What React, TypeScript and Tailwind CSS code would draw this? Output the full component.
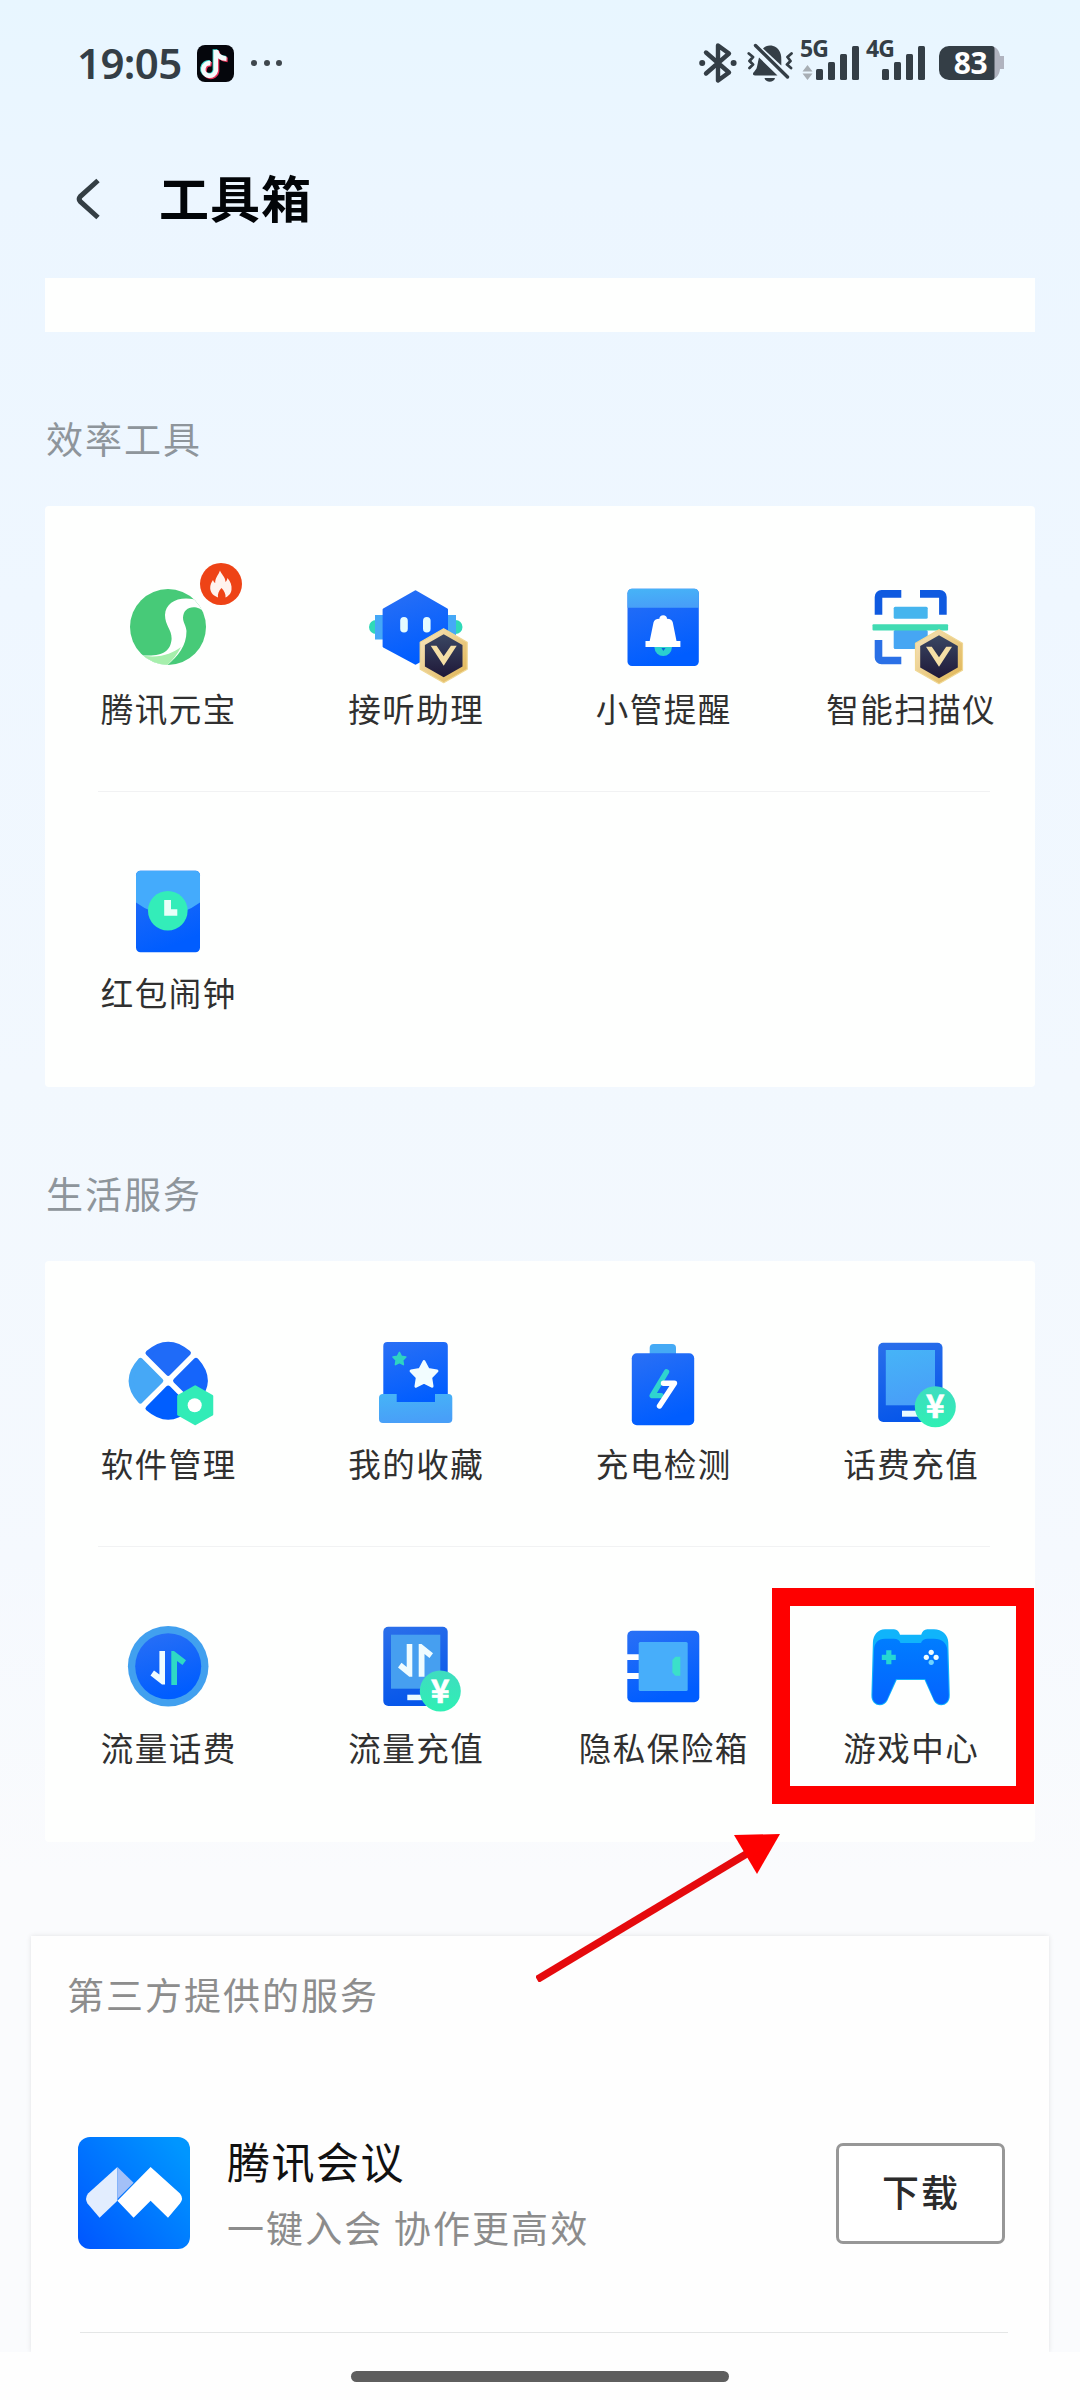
import type { ReactNode } from "react";
import clsx from "clsx";

type Tool = {
  name: string;
  icon: ReactNode;
  hot?: boolean;
  highlight?: boolean;
};

/* ---------- shared icon parts ---------- */

function Gradients() {
  return (
    <svg className="absolute h-0 w-0" aria-hidden="true">
      <defs>
        <linearGradient id="blue" x1="0" y1="0" x2="0.3" y2="1">
          <stop offset="0" stopColor="#2a70f5" />
          <stop offset="1" stopColor="#005dff" />
        </linearGradient>
        <linearGradient id="frame" x1="0" y1="0" x2="0.2" y2="1">
          <stop offset="0" stopColor="#2b6fea" />
          <stop offset="1" stopColor="#0757ea" />
        </linearGradient>
        <linearGradient id="sky" x1="0" y1="0" x2="0.2" y2="1">
          <stop offset="0" stopColor="#46b4f7" />
          <stop offset="1" stopColor="#489ff8" />
        </linearGradient>
        <linearGradient id="teal" x1="0" y1="0" x2="0" y2="1">
          <stop offset="0" stopColor="#3fdcc0" />
          <stop offset="1" stopColor="#2ff0b4" />
        </linearGradient>
        <linearGradient id="gold" x1="0" y1="0" x2="1" y2="1">
          <stop offset="0" stopColor="#f7e6c0" />
          <stop offset="1" stopColor="#dfb350" />
        </linearGradient>
        <linearGradient id="night" x1="0" y1="0" x2="0" y2="1">
          <stop offset="0" stopColor="#3a4763" />
          <stop offset="1" stopColor="#1f1838" />
        </linearGradient>
        <linearGradient id="pad" x1="0" y1="0" x2="0" y2="1">
          <stop offset="0" stopColor="#007dff" />
          <stop offset="1" stopColor="#0463ff" />
        </linearGradient>
        <linearGradient id="meeting" x1="0" y1="1" x2="1" y2="0.2">
          <stop offset="0" stopColor="#0055ff" />
          <stop offset="1" stopColor="#0096ff" />
        </linearGradient>
      </defs>
    </svg>
  );
}

function Icon({ children }: { children: ReactNode }) {
  return (
    <svg viewBox="0 0 100 100" className="mr-[1px] block size-[100px] overflow-visible">
      {children}
    </svg>
  );
}

function VipBadge({ x, y }: { x: number; y: number }) {
  return (
    <g transform={`translate(${x} ${y})`}>
      <path
        d="M0-27 23.5-13.5V13.5L0 27-23.5 13.5V-13.5Z"
        fill="url(#gold)"
        stroke="#f0d894"
        strokeWidth="1.2"
        strokeLinejoin="round"
      />
      <path d="M0-21.5 18.8-10.8V10.8L0 21.5-18.8 10.8V-10.8Z" fill="url(#night)" />
      <path d="M-13-10H-7.2L0 .5 7.2-10H13L0 10Z" fill="#f5dfa6" />
    </g>
  );
}

function Coin({ x, y }: { x: number; y: number }) {
  return (
    <g>
      <circle cx={x} cy={y} r="20.5" fill="url(#teal)" />
      <text
        x={x}
        y={y + 11.5}
        textAnchor="middle"
        fontFamily="Noto Sans CJK SC"
        fontSize="32"
        fontWeight="700"
        fill="#fff"
        stroke="#fff"
        strokeWidth="0.6"
      >
        ¥
      </text>
    </g>
  );
}

const STAR =
  "M0-1 .3-.42 .95-.31 .49.16 .59.81 0 .51-.59.81-.49.16-.95-.31-.3-.42Z";

/* ---------- tool icons ---------- */

const YuanbaoIcon = (
  <Icon>
    <clipPath id="ball">
      <circle cx="50" cy="51" r="38" />
    </clipPath>
    <g clipPath="url(#ball)">
      <rect width="100" height="100" fill="#47ca78" />
      <path
        d="M84 26C66 18 47.5 24 47 39C47 50 54.5 54 53.5 64C52 76 44 81.5 20 79L46 92C58 82 68.5 72 68.5 55C68 49 65 47 65 41.5C65.5 35 69.5 31.3 75.5 31.3C80 31.3 84 33 90 40V20Z"
        fill="#fff"
      />
      <path d="M20 79C42 83 53 78 63 71C58.5 80 53 86 46 92Z" fill="#a6efac" />
    </g>
  </Icon>
);

const RobotIcon = (
  <Icon>
    <circle cx="10" cy="51" r="7" fill="#2fd9b8" />
    <circle cx="89.5" cy="51" r="7" fill="#2fd9b8" />
    <path d="M9 39H18V63.5H9ZM81 39H90V63.5H81Z" fill="#45a8f7" />
    <path
      d="M49.5 15.5 80.8 33.5V70.5L49.5 87.5 17.8 70.5V33.5Z"
      fill="url(#blue)"
      stroke="url(#blue)"
      strokeWidth="2.4"
      strokeLinejoin="round"
    />
    <rect x="34.2" y="41" width="7.6" height="15.5" rx="3.8" fill="#e4fbff" />
    <rect x="57" y="41" width="7.6" height="15.5" rx="3.8" fill="#e4fbff" />
    <VipBadge x={77.7} y={79.7} />
  </Icon>
);

const ReminderIcon = (
  <Icon>
    <rect x="14.5" y="12.7" width="71.3" height="77.3" rx="4.5" fill="url(#blue)" />
    <path d="M14.5 31.7V17.2A4.5 4.5 0 0 1 19 12.7H81.3A4.5 4.5 0 0 1 85.8 17.2V31.7Z" fill="url(#sky)" />
    <circle cx="50.2" cy="71.3" r="8.7" fill="#2bd0cf" />
    <path
      d="M50.2 39.3C52.5 39.3 54 40.8 54 42.8C57.5 43 59.3 44.2 59.8 46.5L63.5 65H67.4V71H32.5V65H36.7L40.5 46.5C41 44.2 43 43 46.4 42.8C46.4 40.8 48 39.3 50.2 39.3Z"
      fill="#fff"
    />
    <path d="M48.5 72H52.5L50.3 75Z" fill="#0b63d8" />
  </Icon>
);

const ScannerIcon = (
  <Icon>
    <g fill="none" stroke="#0f5ae0" strokeWidth="7.6">
      <path d="M40.3 17.9H20.5A3 3 0 0 0 17.5 20.9V38.7" />
      <path d="M59 17.9H78.9A3 3 0 0 1 81.9 20.9V38.7" />
      <path d="M40.3 84.5H20.5A3 3 0 0 1 17.5 81.5V64" stroke="#2a70e6" />
    </g>
    <rect x="32.7" y="30.7" width="34" height="12" rx="1.5" fill="#45b5ee" />
    <rect x="32.7" y="54" width="34" height="19" rx="1.5" fill="#46a6f3" />
    <rect x="11.5" y="48.3" width="75.6" height="6.2" rx="1" fill="#41dbb2" />
    <VipBadge x={78} y={80.7} />
  </Icon>
);

const RedPacketIcon = (
  <Icon>
    <rect x="18" y="10.7" width="64" height="81.5" rx="4.5" fill="url(#blue)" />
    <path
      d="M18 42.5V15.2A4.5 4.5 0 0 1 22.5 10.7H77.5A4.5 4.5 0 0 1 82 15.2V42.5Q50 66 18 42.5Z"
      fill="#44abfc"
    />
    <circle cx="49.8" cy="50.7" r="19.8" fill="#33edb9" />
    <path d="M46.2 40H53V49.2H59.3V55.7H46.2Z" fill="#e9fff9" />
  </Icon>
);

const SoftwareIcon = (
  <Icon>
    <g strokeWidth="5" strokeLinejoin="round">
      <path d="M50.2 42.3 30 22Q50.2 4.5 70.4 22Z" fill="#1f6bf8" stroke="#1f6bf8" />
      <path d="M42.8 49.7 22.4 29.3Q4 49.7 22.4 70.1Z" fill="#46a8f6" stroke="#46a8f6" />
      <path d="M57.6 49.7 78 29.3Q96.5 49.7 78 70.1Z" fill="#1565fb" stroke="#1565fb" />
      <path d="M50.2 57.1 30 77.4Q50.2 95 70.4 77.4Z" fill="#005eff" stroke="#005eff" />
    </g>
    <path
      d="M77.2 55.5 94 65V83.5L77.2 93 60.4 83.5V65Z"
      fill="#32ecb7"
      stroke="#32ecb7"
      strokeWidth="2.5"
      strokeLinejoin="round"
    />
    <circle cx="76.7" cy="74.2" r="7" fill="#fff" />
  </Icon>
);

const FavoritesIcon = (
  <Icon>
    <rect x="17.3" y="11" width="64.5" height="66" rx="4" fill="url(#blue)" />
    <path
      d="M17 63H30.7V71H69V63H82.3A4 4 0 0 1 86.3 67V88A4 4 0 0 1 82.3 92H17A4 4 0 0 1 13 88V67A4 4 0 0 1 17 63Z"
      fill="url(#sky)"
    />
    <path
      d={STAR}
      transform="translate(58 44.2) scale(13.6)"
      fill="#f2fdff"
      stroke="#f2fdff"
      strokeWidth="0.22"
      strokeLinejoin="round"
    />
    <path
      d={STAR}
      transform="translate(33.4 28.2) scale(6.8)"
      fill="#2fd3c2"
      stroke="#2fd3c2"
      strokeWidth="0.22"
      strokeLinejoin="round"
    />
  </Icon>
);

const ChargeIcon = (
  <Icon>
    <path d="M36.7 25V17A4 4 0 0 1 40.7 13H59A4 4 0 0 1 63 17V25Z" fill="#45aaf5" />
    <rect x="18.8" y="22.3" width="62.4" height="72" rx="5" fill="url(#blue)" />
    <g fill="none" strokeWidth="5.4" strokeLinecap="round" strokeLinejoin="round">
      <path d="M53.5 40.8 39.2 64.6H48" stroke="#2fd4cf" />
      <path d="M50.5 52.3H61.5L46.5 75" stroke="#fff" />
    </g>
  </Icon>
);

const BillIcon = (
  <Icon>
    <rect x="17.2" y="11.7" width="64.3" height="79.3" rx="5" fill="url(#frame)" />
    <rect x="24.8" y="19" width="49.2" height="55.3" fill="url(#sky)" />
    <rect x="41" y="79.7" width="20" height="6" fill="#eafaff" />
    <Coin x={74.3} y={75.7} />
  </Icon>
);

const DataBillIcon = (
  <Icon>
    <circle cx="50.2" cy="51.3" r="40.3" fill="#41a0ef" />
    <circle cx="50.2" cy="51.3" r="33" fill="url(#blue)" />
    <path d="M47 36H41.4V59.5L36 55.5L32.5 60.5L44 69.5H47Z" fill="#effcff" />
    <path d="M53.3 70H59V46L64.5 50L68 45.2L56 36H53.3Z" fill="#2fd9c4" />
  </Icon>
);

const DataTopUpIcon = (
  <Icon>
    <rect x="17.3" y="11.7" width="64.4" height="79.3" rx="5" fill="url(#frame)" />
    <rect x="25" y="19.7" width="49.3" height="54" fill="#469ff0" />
    <path d="M46.3 29H40.7V52L35.5 47.8L32 52.6L43.3 61.8H46.3Z" fill="#effcff" />
    <path d="M52.7 61.8H58.5V39L63.5 43L67 38.3L55.5 29H52.7Z" fill="#effcff" />
    <rect x="41.3" y="79.7" width="20" height="5.5" fill="#eafaff" />
    <Coin x={74.3} y={76} />
  </Icon>
);

const SafeIcon = (
  <Icon>
    <rect x="14.3" y="15.7" width="72" height="71.6" rx="5" fill="url(#blue)" />
    <rect x="25.7" y="27" width="49" height="49" rx="1.5" fill="#47aefa" />
    <path d="M14 39.3H25.7V45H14ZM14 58H25.7V64H14Z" fill="#fff" />
    <path d="M67.3 41.7V60.7H62.4L59.4 57.5V44.9L62.4 41.7Z" fill="#3be0c9" />
  </Icon>
);

const GameIcon = (
  <Icon>
    <path
      d="M24 14.3H33C36 14.3 38 16.5 39 19.7H60.2C61.2 16.5 63.2 14.3 66.2 14.3H73C81 14.3 87.3 20 87.3 27.5L88.8 80C89.2 92 76 93 72.8 85.5L63.6 65H35.7L26.4 85.5C23 93 10 92 10.4 80L11.9 27.5C12.2 20 17 14.3 24 14.3Z"
      fill="#10b4fb"
    />
    <path
      d="M24 23.7H33C36 23.7 38.5 25 39.5 28H60C61 25 63.5 23.7 66.5 23.7H73C81 23.7 86 28 86.2 35L87.8 80C88 91 76.5 92 73 84.5L64.2 64H35L26 84.5C22.5 92 11.2 91 11.4 80L13 35C13.2 28 17 23.7 24 23.7Z"
      fill="url(#pad)"
    />
    <path d="M27.8 35.3V49.3M20.8 42.3H34.8" stroke="#25d6d4" strokeWidth="5.2" />
    <g fill="#effcff">
      <circle cx="70.2" cy="37.3" r="2.6" />
      <circle cx="65.3" cy="42.3" r="2.6" />
      <circle cx="75.1" cy="42.3" r="2.6" />
      <circle cx="70.2" cy="47.3" r="2.6" fill="#6fd4ff" />
    </g>
  </Icon>
);

const EFFICIENCY: Tool[] = [
  { name: "腾讯元宝", icon: YuanbaoIcon, hot: true },
  { name: "接听助理", icon: RobotIcon },
  { name: "小管提醒", icon: ReminderIcon },
  { name: "智能扫描仪", icon: ScannerIcon },
  { name: "红包闹钟", icon: RedPacketIcon },
];

const LIFE: Tool[] = [
  { name: "软件管理", icon: SoftwareIcon },
  { name: "我的收藏", icon: FavoritesIcon },
  { name: "充电检测", icon: ChargeIcon },
  { name: "话费充值", icon: BillIcon },
  { name: "流量话费", icon: DataBillIcon },
  { name: "流量充值", icon: DataTopUpIcon },
  { name: "隐私保险箱", icon: SafeIcon },
  { name: "游戏中心", icon: GameIcon, highlight: true },
];

/* ---------- status bar ---------- */

function Signal({ label, arrows }: { label: string; arrows?: boolean }) {
  return (
    <div className="relative h-[40px] w-[59px]">
      <span className="absolute top-[-7px] left-[-1px] font-['Noto_Sans'] text-[23px] leading-[24px] font-bold tracking-[-0.8px]">
        {label}
      </span>
      <svg viewBox="0 0 59 40" className="block h-[40px] w-[59px]" fill="#343e46">
        <rect x="15" y="26" width="7" height="11" rx="1.5" />
        <rect x="27" y="19" width="7" height="18" rx="1.5" />
        <rect x="39" y="11" width="7" height="26" rx="1.5" />
        <rect x="51" y="3" width="7" height="34" rx="1.5" />
        {arrows && <path d="M6.5 22 11.5 28.5H1.5ZM6.5 37 11.5 30.5H1.5Z" fill="#a7aeb4" />}
      </svg>
    </div>
  );
}

function StatusBar() {
  return (
    <div className="flex h-[126px] shrink-0 items-center pr-[76px] pl-[77px] text-[#343e46]">
      <span className="w-[120px] font-['Noto_Sans'] text-[42px] leading-none font-semibold tracking-[-0.6px]">
        19:05
      </span>
      <svg viewBox="0 0 37 37" className="size-[37px]">
        <rect width="37" height="37" rx="8" fill="#05060c" />
        <g fill="none" strokeWidth="4.6">
          <path d="M18.8 5V25.5A6.3 6.3 0 1 1 13.5 18.2M19 5.5C20 11 24 13.5 29.5 13.8" stroke="#3fd8cf" transform="translate(-.9 -.7)" />
          <path d="M18.8 5V25.5A6.3 6.3 0 1 1 13.5 18.2M19 5.5C20 11 24 13.5 29.5 13.8" stroke="#e8345a" transform="translate(1.2 1.1)" />
          <path d="M18.8 5V25.5A6.3 6.3 0 1 1 13.5 18.2M19 5.5C20 11 24 13.5 29.5 13.8" stroke="#f4fafa" />
        </g>
      </svg>
      <div className="ml-[17px] flex gap-[6.5px]">
        <i className="size-[6px] rounded-full bg-[#3f474d]" />
        <i className="size-[6px] rounded-full bg-[#3f474d]" />
        <i className="size-[6px] rounded-full bg-[#3f474d]" />
      </div>

      <div className="ml-auto flex items-center">
        <svg viewBox="0 0 38 42" className="h-[42px] w-[38px]">
          <path
            d="M7 10.5 30 30.5 19 38.5V3.5L30 11.5 7 31.5"
            fill="none"
            stroke="#343e46"
            strokeWidth="4.4"
            strokeLinejoin="round"
            strokeLinecap="round"
          />
          <circle cx="3.2" cy="21" r="3" fill="#343e46" />
          <circle cx="34.6" cy="21" r="3" fill="#343e46" />
        </svg>
        <svg viewBox="0 0 46 42" className="ml-[10px] h-[42px] w-[46px]" fill="#343e46">
          <path d="M12 15.5 30.5 33.5H8C5.5 33.5 5.5 31 7 30L9.5 26.5C10.5 24 10.8 20 12 15.5Z" />
          <path d="M16 6.5C19 2.8 25 2.6 29 5.2C33.5 8.5 34.3 13 34.3 17.5V23.5Z" />
          <path d="M17.5 36H28C27 41 18.5 41 17.5 36Z" />
          <g fill="none" stroke="#343e46" strokeLinecap="round">
            <path d="M8.5 3.5 40.5 35" strokeWidth="3.4" />
            <path d="M1.8 11.5 6 15 2.5 19 6 22.5 2.5 26M44.5 11.5 40.5 15 43.5 19 40 22.5 44 26" strokeWidth="2.8" strokeLinejoin="round" />
          </g>
        </svg>
        <div className="ml-[8px] flex gap-[7px]">
          <Signal label="5G" arrows />
          <Signal label="4G" />
        </div>
        <div className="relative ml-[13px] h-[34px] w-[65px]">
          <svg viewBox="0 0 65 34" className="block h-[34px] w-[65px]">
            <path d="M50 0C57 0 60.5 4 61 10H65V23H61C60.5 29 57 34 50 34Z" fill="#b0b3bf" />
            <path d="M10 0H52.5A3 3 0 0 1 55.5 3V31A3 3 0 0 1 52.5 34H10A10 10 0 0 1 0 24V10A10 10 0 0 1 10 0Z" fill="#343e46" />
          </svg>
          <span className="absolute inset-y-0 left-0 w-[63px] text-center font-['Noto_Sans'] text-[30px] leading-[33px] font-bold tracking-[-0.5px] text-white">
            83
          </span>
        </div>
      </div>
    </div>
  );
}

/* ---------- tool grid ---------- */

function ToolCell({ tool }: { tool: Tool }) {
  return (
    <div className="relative flex flex-col items-center">
      {tool.icon}
      <span className="mt-[8px] mb-[2px] text-[32.5px] leading-[48px] tracking-[1.5px] whitespace-nowrap text-[#303030]">
        {tool.name}
      </span>
      {tool.hot && (
        <span className="absolute top-[-13px] left-[155px] flex size-[42px] items-center justify-center rounded-full bg-[#ee4316]">
          <svg viewBox="0 0 24 28" className="h-[28px] w-[24px]">
            <path
              d="M11 .5C12 4 16.5 7 16.5 12C17.5 11 18.3 9.5 18.5 8C21.5 11.5 23 15.5 22.5 19.5C22.2 23.5 19.5 26 16.5 27.5C17 24 15 20.5 12.5 18C10 20.5 8.3 24 9 27.5C5 26 1.5 23 1.2 18.5C1 15 2.5 12 4 10C4.5 11.5 5 12.2 6.2 13C6 8 9.5 5 11 .5Z"
              fill="#fff3ee"
            />
          </svg>
        </span>
      )}
      {tool.highlight && (
        <span className="absolute top-[-27px] left-[-16px] h-[216px] w-[262px] border-[18px] border-[#fe0000]" />
      )}
    </div>
  );
}

function ToolSection({ title, tools, className }: { title: string; tools: Tool[]; className?: string }) {
  const rows = [tools.slice(0, 4), tools.slice(4)];
  return (
    <section className={clsx("px-[45px]", className)}>
      <h2 className="h-[56px] pl-[1px] text-[37px] leading-[54px] tracking-[2px] text-[#8e959b]">{title}</h2>
      <div className="mt-[39px] h-[581px] rounded-[4px] bg-[#fefffe] pt-[70px]">
        {rows.map((row, i) => (
          <div key={i}>
            {i > 0 && <div className="mt-[57px] mr-[45px] mb-[68px] ml-[53px] h-[1px] bg-[#f1f2f3]" />}
            <div className="grid grid-cols-4">
              {row.map((tool) => (
                <ToolCell key={tool.name} tool={tool} />
              ))}
            </div>
          </div>
        ))}
      </div>
    </section>
  );
}

export default function App() {
  return (
    <div className="relative flex h-[2400px] w-[1080px] flex-col overflow-hidden bg-[linear-gradient(#e8f6ff_0%,#ecf6ff_8%,#eff7ff_25%,#f2f8fe_45%,#f5f9fe_65%,#fafbfd_78%)] font-['Noto_Sans_CJK_SC',sans-serif]">
      <Gradients />
      <StatusBar />

      <header className="flex h-[152px] shrink-0 items-start pt-[38px] pl-[76px]">
        <svg viewBox="0 0 24 42" className="mt-[14px] h-[42px] w-[24px]">
          <path d="M22 2.5 4.2 18.6Q2.2 21 4.2 23.4L22 39.5" fill="none" stroke="#343e44" strokeWidth="5" />
        </svg>
        <h1 className="-mt-[3px] ml-[59px] text-[50px] leading-[70px] font-bold tracking-[1px] text-[#020508]">
          工具箱
        </h1>
      </header>

      {/* tail of the card that is scrolled under the header */}
      <div className="mx-[45px] h-[54px] shrink-0 bg-[#fefffe]" />

      <ToolSection title="效率工具" tools={EFFICIENCY} className="mt-[79px]" />
      <ToolSection title="生活服务" tools={LIFE} className="mt-[79px]" />

      <section className="mx-[31px] mt-[94px] h-[416px] shrink-0 bg-[#fefefe] pr-[48px] pl-[47px] shadow-[0_0_5px_rgba(0,0,0,0.1)]">
        <h2 className="-ml-[11px] h-[87px] pt-[30px] text-[37px] leading-[56px] tracking-[2px] text-[#8d8d8d]">
          第三方提供的服务
        </h2>
        <div className="mt-[114px] flex h-[112px] items-center">
          <svg viewBox="0 0 112 112" className="size-[112px]">
            <rect width="112" height="112" rx="12" fill="url(#meeting)" />
            <path d="M39.4 30 10 56.5Q6.5 61.5 9.5 66.5L21.6 80.7 39.4 63.7Z" fill="#e2edfe" />
            <path d="M39.4 30 55.6 45.7 39.4 62Z" fill="#a3c0f8" />
            <path
              d="M72.6 30 39.4 63.7 55.6 80.7 72.6 63.7 90 80.7 102 66.5Q106 61.5 102 56.5Z"
              fill="#fff"
            />
          </svg>
          <div className="ml-[37px] flex flex-col pt-[1px]">
            <span className="text-[43px] leading-[66px] tracking-[1.5px] text-[#111]">腾讯会议</span>
            <span className="text-[37px] leading-[68px] tracking-[2.1px] text-[#8c8c8c]">
              一键入会 协作更高效
            </span>
          </div>
          <button className="mr-[-4px] ml-auto h-[101px] w-[169px] rounded-[7px] border-[3px] border-[#979797] bg-white pb-[3px] pl-[1px] text-[37px] leading-none font-medium tracking-[2px] text-[#2b2b2b]">
            下载
          </button>
        </div>
        <div className="mt-[83px] mr-[-7px] ml-[2px] h-[1px] bg-[#e4e6e6]" />
      </section>

      <div className="flex flex-1 items-start justify-center bg-[#fefefe] pt-[19px]">
        <div className="h-[11px] w-[378px] rounded-full bg-[#5e5e5e]" />
      </div>

      {/* arrow pointing at the highlighted tool */}
      <svg viewBox="0 0 246 150" className="absolute top-[1832px] left-[536px] h-[150px] w-[246px]">
        <path d="M1 147.5 212 21" stroke="#e50a0d" strokeWidth="7.6" />
        <path d="M244 2 198 3 221 42Z" fill="#fe0000" />
      </svg>
    </div>
  );
}
